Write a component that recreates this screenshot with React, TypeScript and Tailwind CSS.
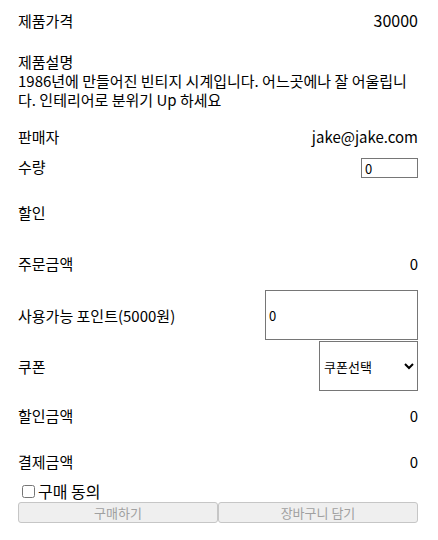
import { useState } from 'react'

const font = { fontFamily: '"Noto Sans CJK KR", "Noto Sans", sans-serif' }

function Row({ label, value, className = '' }: { label: string; value?: string; className?: string }) {
  return (
    <div className={`flex h-[24px] items-center justify-between ${className}`}>
      <span>{label}</span>
      {value !== undefined && <span>{value}</span>}
    </div>
  )
}

export default function App() {
  const [qty, setQty] = useState('0')
  const [point, setPoint] = useState('0')
  const [agree, setAgree] = useState(false)

  return (
    <div
      className="w-[438px] pl-[18px] pr-[20px] text-[15px] leading-[19px] text-black"
      style={font}
    >
      {/* 제품 정보 */}
      <div className="flex h-[40px] items-center justify-between">
        <span>제품가격</span>
        <span className="text-[16px]">30000</span>
      </div>

      <div className="mt-[12px]">
        <div>제품설명</div>
        <div>1986년에 만들어진 빈티지 시계입니다. 어느곳에나 잘 어울립니다. 인테리어로 분위기 Up 하세요</div>
      </div>

      <Row label="판매자" value="jake@jake.com" className="mt-[15px]" />

      <div className="mt-[10px] flex h-[20px] items-center justify-between">
        <span className="-mt-[3px]">수량</span>
        <input
          type="number"
          value={qty}
          onChange={e => setQty(e.target.value)}
          className="h-[20px] w-[57px] border border-[#767676] px-[3px] text-[13px] [appearance:textfield] [&::-webkit-inner-spin-button]:appearance-none"
        />
      </div>

      <Row label="할인" className="mt-[22px]" />
      <Row label="주문금액" value="0" className="mt-[27px]" />

      {/* 포인트 / 쿠폰 */}
      <div className="mt-[15px] flex h-[50px] items-center justify-between">
        <span>사용가능 포인트(5000원)</span>
        <input
          type="text"
          value={point}
          onChange={e => setPoint(e.target.value)}
          className="h-[50px] w-[153px] border border-[#767676] px-[3px] text-[13px]"
        />
      </div>

      <div className="mt-[1px] flex h-[50px] items-center justify-between">
        <span>쿠폰</span>
        <select className="h-[50px] w-[99px] border border-[#767676] pl-0 text-[13px]" defaultValue="">
          <option value="">쿠폰선택</option>
          <option value="10">10% 할인</option>
        </select>
      </div>

      <Row label="할인금액" value="0" className="mt-[12px]" />
      <Row label="결제금액" value="0" className="mt-[22px]" />

      {/* 동의 + 버튼 */}
      <label className="mt-[9px] flex h-[18px] items-center text-[16px]">
        <input
          type="checkbox"
          checked={agree}
          onChange={e => setAgree(e.target.checked)}
          className="mr-[3px] ml-[4px] h-[13px] w-[13px]"
        />
        <span>구매 동의</span>
      </label>

      <div className="mt-[2px] flex">
        <button
          disabled={!agree}
          className="h-[21px] flex-1 rounded-[3px] border border-[#c6c6c6] bg-[#efefef] text-[13px] leading-none text-[#a0a0a0]"
        >
          구매하기
        </button>
        <button
          disabled={!agree}
          className="h-[21px] flex-1 rounded-[3px] border border-[#c6c6c6] bg-[#efefef] text-[13px] leading-none text-[#a0a0a0]"
        >
          장바구니 담기
        </button>
      </div>
    </div>
  )
}
